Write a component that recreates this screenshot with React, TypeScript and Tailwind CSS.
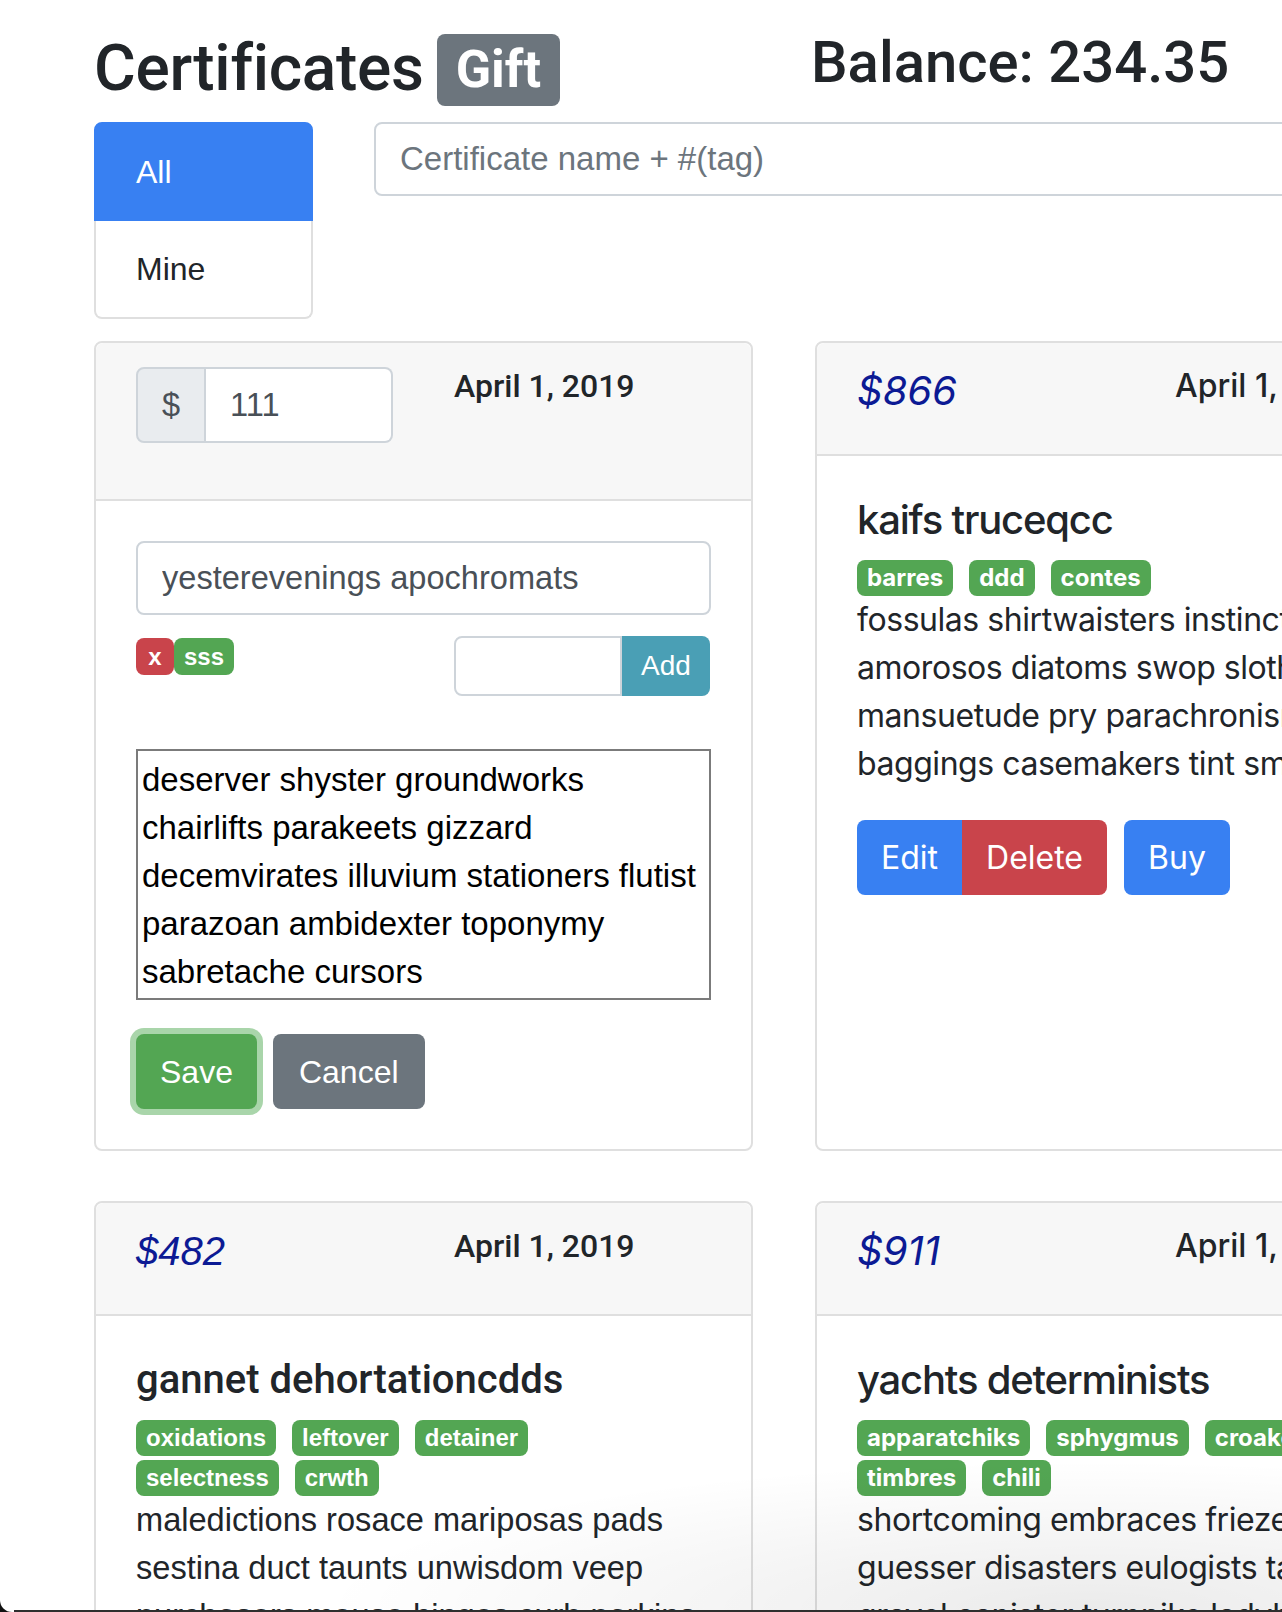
const L = "[font-family:'Liberation_Sans',Arial,sans-serif]";
const R = "[font-family:Inter,sans-serif]";
const RB = "[font-family:Roboto,sans-serif]";

function Tag({ children, font }: { children: React.ReactNode; font: string }) {
  return (
    <span
      className={`${font} inline-flex h-[36px] items-center rounded-lg bg-[#53a653] px-[10px] text-[24px] font-bold leading-none text-white`}
    >
      {children}
    </span>
  );
}

function CardHeader({ price, font, head }: { price: string; font: string; head: string }) {
  return (
    <div className="flex rounded-t-lg border-b-2 border-[#dfdfdf] bg-[#f7f7f7] px-[40px] py-[24px]">
      <div className="w-[318px] shrink-0">
        <h5 className={`${font} h-[63px] text-[40px] italic leading-[48px] text-[#0c1a94]`}>{price}</h5>
      </div>
      <h6 className={`${head} text-[32px] font-medium leading-[38px]`}>April 1, 2019</h6>
    </div>
  );
}

function ViewCard({
  font,
  head,
  body,
  titleCls,
  price,
  title,
  tags,
  lines,
  buttons,
}: {
  font: string;
  head: string;
  body: string;
  titleCls: string;
  price: string;
  title: string;
  tags: string[][];
  lines: string[];
  buttons?: boolean;
}) {
  return (
    <div className={`${font} flex w-[659px] shrink-0 flex-col rounded-lg border-2 border-[#dfdfdf] text-[#212529]`}>
      <CardHeader price={price} font={font} head={head} />
      <div className="flex-1 px-[40px] pt-[40px] pb-[40px]">
        <h5 className={`${head} ${titleCls} text-[40px] font-medium leading-[48px]`}>{title}</h5>
        <div className="mt-[16px] flex flex-col gap-[4px]">
          {tags.map((row, i) => (
            <div key={i} className="flex gap-[16px] whitespace-nowrap">
              {row.map((t) => (
                <Tag key={t} font={font}>
                  {t}
                </Tag>
              ))}
            </div>
          ))}
        </div>
        <div className={`${body} whitespace-nowrap leading-[48px]`}>
          {lines.map((l) => (
            <div key={l}>{l}</div>
          ))}
        </div>
        {buttons && (
          <div className="mt-[32px] flex text-[32px] text-white">
            <button className="h-[75px] rounded-l-lg bg-[#3880f2] px-[24px]">Edit</button>
            <button className="h-[75px] rounded-r-lg bg-[#c9444b] px-[24px]">Delete</button>
            <button className="ml-[17px] h-[75px] rounded-lg bg-[#3880f2] px-[24px]">Buy</button>
          </div>
        )}
      </div>
    </div>
  );
}

function EditCard() {
  return (
    <div className={`${L} flex w-[659px] shrink-0 flex-col rounded-lg border-2 border-[#dfdfdf] text-[#212529]`}>
      <div className="flex rounded-t-lg border-b-2 border-[#dfdfdf] bg-[#f7f7f7] px-[40px] py-[24px]">
        <div className="w-[318px] shrink-0">
          <div className="mb-[32px] flex h-[76px] w-[257px]">
            <span className="flex w-[70px] shrink-0 items-center justify-center rounded-l-lg border-2 border-[#ced4da] bg-[#e9ecef] text-[32.6px] text-[#495057]">
              $
            </span>
            <input
              defaultValue="111"
              className="w-full min-w-0 rounded-r-lg border-2 border-l-0 border-[#ced4da] bg-white px-[24px] text-[32.6px] text-[#495057] outline-none"
            />
          </div>
        </div>
        <h6 className={`${RB} text-[32px] font-medium leading-[38px]`}>April 1, 2019</h6>
      </div>
      <div className="flex flex-1 flex-col px-[40px] py-[40px]">
        <input
          defaultValue="yesterevenings apochromats"
          className="h-[74px] w-full rounded-lg border-2 border-[#ced4da] px-[24px] text-[32.6px] text-[#495057] outline-none"
        />
        <div className="mt-[21px] flex h-[60px]">
          <div className="flex w-[318px] shrink-0 items-start pt-[2px] text-[24px] font-bold text-white">
            <span className="flex h-[37px] w-[38px] items-center justify-center rounded-lg bg-[#c9444b]">x</span>
            <span className="flex h-[37px] w-[60px] items-center justify-center rounded-lg bg-[#53a653]">sss</span>
          </div>
          <div className="flex">
            <input className="h-[60px] w-[168px] rounded-l-lg border-2 border-[#ced4da] bg-white outline-none" />
            <button className="h-[60px] w-[88px] rounded-r-lg bg-[#4a9fb5] text-[28px] text-white">Add</button>
          </div>
        </div>
        <textarea
          readOnly
          wrap="off"
          value={
            "deserver shyster groundworks\nchairlifts parakeets gizzard\ndecemvirates illuvium stationers flutist\nparazoan ambidexter toponymy\nsabretache cursors"
          }
          className="mt-[53px] h-[251px] w-full resize-none overflow-hidden border-2 border-[#7b7b7b] px-[4px] pt-[5px] pb-[2px] text-[33px] leading-[48px] text-black outline-none"
        />
        <div className="mt-[34px] flex gap-[16px] text-[32px] text-white">
          <button className="h-[75px] rounded-lg bg-[#53a653] px-[24px] shadow-[0_0_0_6px_#a9d5aa]">Save</button>
          <button className="h-[75px] rounded-lg bg-[#6c757d] px-[26px]">Cancel</button>
        </div>
      </div>
    </div>
  );
}

export default function App() {
  return (
    <div className="relative h-[1612px] w-[1282px] overflow-hidden bg-white text-[#212529]">
      <div className="pl-[94px] pt-[27px]">
        <div className="flex items-start">
          <div className="flex w-[717px] shrink-0 items-start">
            <h1 className={`${RB} mt-[3px] text-[64px] font-medium leading-[77px] tracking-[-0.3px]`}>Certificates</h1>
            <span
              className={`${RB} ml-[13px] mt-[7px] flex h-[72px] items-center rounded-lg bg-[#6c757d] px-[19px] text-[52px] font-bold text-white`}
            >
              Gift
            </span>
          </div>
          <h2 className={`${RB} whitespace-nowrap text-[58px] font-medium leading-[70px]`}>Balance: 234.35</h2>
        </div>

        <div className={`${L} mt-[15px] flex items-start text-[32px]`}>
          <div className="w-[219px] shrink-0">
            <div className="flex h-[99px] items-center rounded-t-lg border-2 border-[#3880f2] bg-[#3880f2] px-[40px] text-white">
              All
            </div>
            <div className="flex h-[98px] items-center rounded-b-lg border-2 border-t-0 border-[#dfdfdf] px-[40px]">
              Mine
            </div>
          </div>
          <input
            placeholder="Certificate name + #(tag)"
            className="ml-[61px] h-[74px] w-[1000px] shrink-0 rounded-lg border-2 border-[#ced4da] px-[24px] text-[33px] text-[#495057] outline-none placeholder:text-[#6c757d]"
          />
        </div>

        <div className="mt-[22px] flex items-stretch gap-[62px]">
          <EditCard />
          <ViewCard
            font={R}
            head={R}
            body="text-[32px] tracking-[-0.45px]"
            titleCls="tracking-[-1.2px]"
            price="$866"
            title="kaifs truceqcc"
            tags={[["barres", "ddd", "contes"]]}
            lines={[
              "fossulas shirtwaisters instincts",
              "amorosos diatoms swop sloths",
              "mansuetude pry parachronisms",
              "baggings casemakers tint smiles",
            ]}
            buttons
          />
        </div>

        <div className="mt-[50px] flex items-stretch gap-[62px]">
          <ViewCard
            font={L}
            head={RB}
            body="text-[32.6px]"
            titleCls="tracking-[0px]"
            price="$482"
            title="gannet dehortationcdds"
            tags={[
              ["oxidations", "leftover", "detainer"],
              ["selectness", "crwth"],
            ]}
            lines={[
              "maledictions rosace mariposas pads",
              "sestina duct taunts unwisdom veep",
              "purchasers mouse hinges curb parkins",
              "obtunds vesper",
            ]}
          />
          <ViewCard
            font={R}
            head={R}
            body="text-[32px] tracking-[-0.45px]"
            titleCls="tracking-[-1.2px]"
            price="$911"
            title="yachts determinists"
            tags={[
              ["apparatchiks", "sphygmus", "croakers"],
              ["timbres", "chili"],
            ]}
            lines={[
              "shortcoming embraces friezes",
              "guesser disasters eulogists tabs",
              "gravel canister turnpike ladybirds",
              "sundry",
            ]}
          />
        </div>
      </div>

      <div className="pointer-events-none absolute bottom-[2px] left-0 right-0 h-[150px] bg-[radial-gradient(ellipse_60%_100%_at_85%_100%,rgba(0,0,0,0.08),transparent)]" />
      <div className="absolute bottom-0 left-0 right-0 h-[2px] bg-[#2e2e2e]" />
      <div className="absolute bottom-0 left-0 h-[14px] w-[14px] bg-[#111]">
        <div className="h-full w-full rounded-bl-[12px] bg-white" />
      </div>
    </div>
  );
}
